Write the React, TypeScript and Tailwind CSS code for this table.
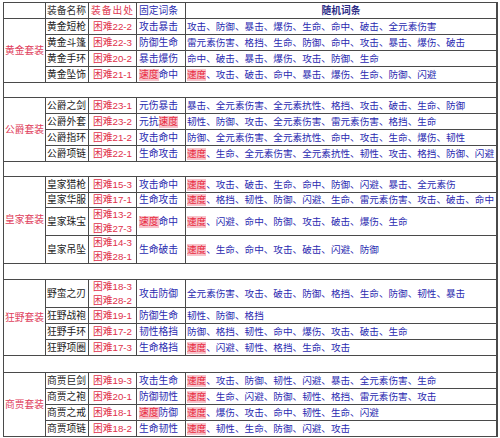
import React from 'react';

type Item = {
  name: string;
  src: string[];
  fixed: string[];
  rand: string[];
};

type Group = {
  suit: string;
  items: Item[];
};

const groups: Group[] = [
  {
    suit: '黄金套装',
    items: [
      { name: '黄金短枪', src: ['困难22-2'], fixed: ['攻击', '暴击'], rand: ['攻击', '防御', '暴击', '爆伤', '生命', '命中', '破击', '全元素伤害'] },
      { name: '黄金斗篷', src: ['困难22-3'], fixed: ['防御', '生命'], rand: ['雷元素伤害', '格挡', '生命', '防御', '命中', '攻击', '暴击', '爆伤', '破击'] },
      { name: '黄金手环', src: ['困难20-2'], fixed: ['暴击', '爆伤'], rand: ['命中', '破击', '暴击', '爆伤', '攻击', '防御', '生命'] },
      { name: '黄金坠饰', src: ['困难21-1'], fixed: ['速度', '命中'], rand: ['速度', '攻击', '破击', '命中', '暴击', '爆伤', '生命', '防御', '闪避'] },
    ],
  },
  {
    suit: '公爵套装',
    items: [
      { name: '公爵之剑', src: ['困难23-1'], fixed: ['元伤', '暴击'], rand: ['暴击', '全元素伤害', '全元素抗性', '格挡', '攻击', '破击', '生命', '防御'] },
      { name: '公爵外套', src: ['困难23-2'], fixed: ['元抗', '速度'], rand: ['韧性', '防御', '攻击', '全元素伤害', '雷元素伤害', '格挡', '生命'] },
      { name: '公爵指环', src: ['困难21-2'], fixed: ['攻击', '命中'], rand: ['防御', '全元素伤害', '全元素抗性', '命中', '攻击', '生命', '爆伤', '韧性'] },
      { name: '公爵项链', src: ['困难22-1'], fixed: ['生命', '攻击'], rand: ['速度', '生命', '全元素伤害', '全元素抗性', '韧性', '攻击', '格挡', '防御', '闪避'] },
    ],
  },
  {
    suit: '皇家套装',
    items: [
      { name: '皇家猎枪', src: ['困难15-3'], fixed: ['攻击', '命中'], rand: ['速度', '攻击', '破击', '生命', '命中', '防御', '闪避', '暴击', '全元素伤'] },
      { name: '皇家华服', src: ['困难17-1'], fixed: ['生命', '攻击'], rand: ['速度', '格挡', '韧性', '防御', '闪避', '生命', '雷元素伤害', '攻击', '破击', '命中'] },
      { name: '皇家珠宝', src: ['困难13-2', '困难27-3'], fixed: ['速度', '命中'], rand: ['速度', '闪避', '命中', '防御', '攻击', '破击', '爆伤', '生命'] },
      { name: '皇家吊坠', src: ['困难14-3', '困难28-1'], fixed: ['生命', '破击'], rand: ['速度', '生命', '命中', '攻击', '破击', '闪避', '防御'] },
    ],
  },
  {
    suit: '狂野套装',
    items: [
      { name: '野蛮之刃', src: ['困难18-3', '困难28-2'], fixed: ['攻击', '防御'], rand: ['全元素伤害', '攻击', '破击', '防御', '格挡', '生命', '防御', '韧性', '暴击'] },
      { name: '狂野战袍', src: ['困难19-1'], fixed: ['防御', '生命'], rand: ['韧性', '防御', '格挡'] },
      { name: '狂野手环', src: ['困难17-2'], fixed: ['韧性', '格挡'], rand: ['防御', '格挡', '韧性', '命中', '爆伤', '攻击', '破击', '生命'] },
      { name: '狂野项圈', src: ['困难17-3'], fixed: ['生命', '格挡'], rand: ['速度', '闪避', '韧性', '格挡', '生命', '攻击'] },
    ],
  },
  {
    suit: '商贾套装',
    items: [
      { name: '商贾巨剑', src: ['困难19-3'], fixed: ['攻击', '生命'], rand: ['速度', '攻击', '防御', '韧性', '闪避', '暴击', '全元素伤害', '生命'] },
      { name: '商贾之袍', src: ['困难20-1'], fixed: ['防御', '韧性'], rand: ['速度', '生命', '闪避', '防御', '韧性', '格挡', '雷元素伤害', '攻击'] },
      { name: '商贾之戒', src: ['困难18-1'], fixed: ['速度', '防御'], rand: ['速度', '爆伤', '攻击', '命中', '韧性', '生命', '闪避'] },
      { name: '商贾项链', src: ['困难18-2'], fixed: ['生命', '韧性'], rand: ['速度', '韧性', '生命', '防御', '闪避', '攻击'] },
    ],
  },
];

// 速度 gets the pink marker, like in the sheet
function Word({ w }: { w: string }) {
  if (w === '速度') {
    return <span className="bg-[#f7c3ca] text-[#e8283e]">{w}</span>;
  }
  return <span>{w}</span>;
}

const cell = 'bg-white flex items-center overflow-hidden whitespace-nowrap';

export default function App() {
  return (
    <div
      className="w-[500px] h-[438px] bg-white pl-[3px] pt-[2px] text-[9.75px] leading-[12px]"
      style={{ fontFamily: '"Liberation Sans", "Noto Sans CJK SC", sans-serif' }}
    >
      <div className="grid w-[495px] grid-cols-[41px_42px_47px_48px_310px] grid-rows-[15px_15px_15px_15px_15px_14px_15px_15px_15px_15px_14px_15px_14px_27px_27px_15px_27px_15px_15px_15px_16px_15px_15px_15px_15px] gap-px bg-[#4a4a4a] p-px">
        {/* header */}
        <div className={cell} />
        <div className={`${cell} pl-[1px] text-[#333]`}>装备名称</div>
        <div className={`${cell} justify-center text-[#e03a52] tracking-[1px]`}>装备出处</div>
        <div className={`${cell} pl-[2px] text-[#2a2ab0]`}>固定词条</div>
        <div className={`${cell} justify-center font-bold text-[#2c2c86]`}>随机词条</div>

        {groups.map((g, gi) => (
          <React.Fragment key={g.suit}>
            {gi > 0 && <div className={`${cell} col-span-5`} />}
            <div className={`${cell} row-span-4 justify-center text-[#e0405c]`}>{g.suit}</div>
            {g.items.map((it) => (
              <React.Fragment key={it.name}>
                <div className={`${cell} pl-[1px] text-[#222]`}>{it.name}</div>
                <div className={`${cell} flex-col justify-center gap-[2px] text-[#e0304a]`}>
                  {it.src.map((s) => (
                    <span key={s}>{s}</span>
                  ))}
                </div>
                <div className={`${cell} pl-[2px] text-[#2a2ab0]`}>
                  {it.fixed.map((w, i) => (
                    <Word key={i} w={w} />
                  ))}
                </div>
                <div className={`${cell} pl-[1px] text-[9.6px] text-[#2a2ab0]`}>
                  {it.rand.map((w, i) => (
                    <React.Fragment key={i}>
                      {i > 0 && <span>、</span>}
                      <Word w={w} />
                    </React.Fragment>
                  ))}
                </div>
              </React.Fragment>
            ))}
          </React.Fragment>
        ))}
      </div>
    </div>
  );
}
